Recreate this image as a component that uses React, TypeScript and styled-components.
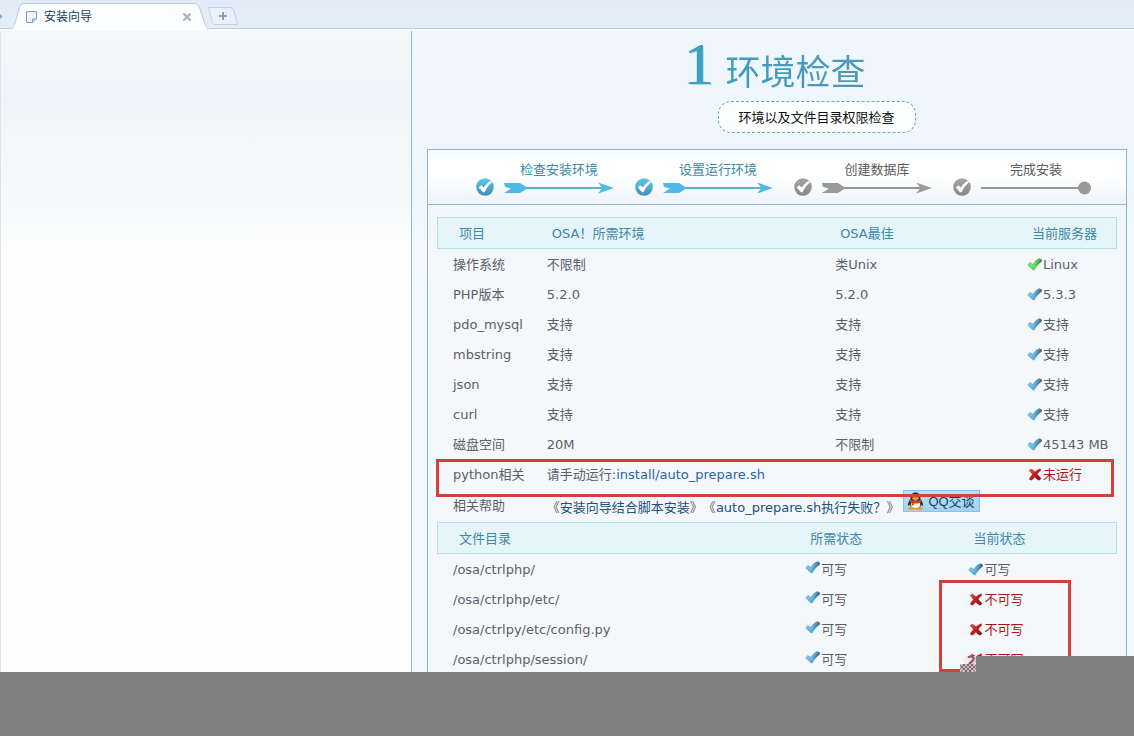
import React from 'react';
import styled, { createGlobalStyle, css } from 'styled-components';

const GlobalStyle = createGlobalStyle`
  * { box-sizing: border-box; }
  body {
    margin: 0;
    font-family: 'DejaVu Sans', 'Noto Sans CJK SC', sans-serif;
    font-size: 13px;
    color: #5b6067;
    text-spacing-trim: space-all;
  }
`;

const Screen = styled.div`
  display: flex;
  flex-direction: column;
  height: 100vh;
  overflow: hidden;
  background: #808080;
`;

/* ---------- browser tab strip ---------- */

const TabStrip = styled.header`
  display: flex;
  flex: none;
  align-items: flex-end;
  height: 31px;
  padding-bottom: 1px;
  background: linear-gradient(#e2ecf8, #e4eef8);
  box-shadow: inset 0 -2px #fbfdff, inset 0 -3px #bfcde0;
  overflow: hidden;
`;

const StripArrow = styled.span`
  align-self: center;
  width: 12px;
  height: 30px;
`;

const Tab = styled.div`
  position: relative;
  display: flex;
  align-items: center;
  gap: 6px;
  width: 196px;
  height: 28px;
  padding: 2px 15px 0 13px;
  font-size: 12px;
  color: #17405c;
`;

const TabShape = styled.svg`
  position: absolute;
  inset: 0;
`;

const TabIcon = styled.svg`
  position: relative;
  flex: none;
`;

const TabTitle = styled.span`
  position: relative;
  flex: 1;
  line-height: 16px;
`;

const IconButton = styled.button`
  position: relative;
  display: flex;
  padding: 0;
  border: 0;
  background: none;
`;

const NewTab = styled(IconButton)`
  align-self: flex-start;
  margin-top: 7px;
`;

/* ---------- page frame ---------- */

const Content = styled.div`
  position: relative;
  display: flex;
  flex: 1;
  min-height: 0;
  overflow: hidden;
`;

const SidePane = styled.aside`
  flex: none;
  width: 412px;
  border-left: 1px solid #dde2e8;
  border-right: 1px solid #8fb9d2;
  background: linear-gradient(#f4f7fa 0, #f0f4f8 72px, #f3f7fa 110px, #f6f9fb 170px, #fdfdfd 220px);
`;

const MainPane = styled.main`
  flex: 1;
  min-width: 0;
  padding: 0 7px 0 15px;
  background: linear-gradient(#eff7fc 0, #f0f7fc 180px, #f4f8fb 260px);
`;

const StatusBar = styled.footer`
  flex: none;
  height: 64px;
  background: #808080;
`;

const Notch = styled.div`
  position: absolute;
  right: 0;
  bottom: 0;
  display: flex;
  align-items: flex-end;
`;

const NotchFill = styled.div`
  width: 158px;
  height: 16px;
  background: #808080;
`;

/* ---------- heading ---------- */

const Heading = styled.div`
  display: flex;
  justify-content: center;
  gap: 6px;
  height: 118px;
  padding-left: 44px;
`;

const StepNumber = styled.span`
  width: 32px;
  padding-top: 1px;
  font: 60px/64px 'Liberation Serif', serif;
  color: #3ba1be;
  text-align: center;
  text-shadow: 1px 0 #3ba1be, 2px 1px #b5deeb;
`;

const HeadingText = styled.div`
  padding-top: 20px;
`;

const Title = styled.h1`
  margin: 0 0 6px 5px;
  font-size: 35px;
  font-weight: 400;
  line-height: 44px;
  background: linear-gradient(110deg, #3a9fc2, #5a92b2);
  background-clip: text;
  color: transparent;
`;

const Subtitle = styled.p`
  display: flex;
  align-items: center;
  justify-content: center;
  width: 198px;
  height: 32px;
  margin: 0 0 0 -3px;
  padding-bottom: 2px;
  border: 1px dashed #55b0bd;
  border-radius: 13px;
  background: #fcfefe;
  color: #111;
`;

/* ---------- wizard panel ---------- */

const Panel = styled.section`
  border: 1px solid #8db6cc;
  border-bottom: 0;
`;

const Steps = styled.ol`
  display: flex;
  height: 55px;
  margin: 0;
  padding: 10px 0 0 48px;
  list-style: none;
  border-bottom: 1px solid #8db6cc;
  background: linear-gradient(#f6fbfe, #ffffff 16px, #fdfefe 30px, #edf3f9);
`;

const Step = styled.li<{ $done?: boolean }>`
  display: flex;
  align-items: flex-end;
  flex: none;
  width: 159px;
  height: 36px;
  color: ${(p) => (p.$done ? '#3f8aa8' : '#5a5a5a')};
`;

const StepBody = styled.div`
  display: flex;
  flex-direction: column;
  align-items: center;
  width: 110px;
  margin-left: 10px;
  line-height: 20px;
`;

const Tables = styled.div`
  padding: 12px 9px 0;
`;

const TableWrap = styled.div`
  position: relative;
`;

const Table = styled.table`
  width: 100%;
  table-layout: fixed;
  border-collapse: separate;
  border-spacing: 0;
`;

const Col = styled.col<{ $w: number }>`
  width: ${(p) => p.$w}%;
`;

const Th = styled.th`
  height: 32px;
  padding: 0 0 2px 21px;
  border: solid #b7dcea;
  border-width: 1px 0;
  background: #e5f5f9;
  color: #3f87a8;
  font-weight: 400;
  text-align: left;
  &:first-child { border-left-width: 1px; }
  &:last-child { border-right-width: 1px; }
`;

const Td = styled.td`
  height: 30px;
  padding: 2px 0 0 16px;
  line-height: 18px;
  white-space: nowrap;
`;

const HelpTd = styled(Td)`
  height: 33px;
  padding-top: 0;
`;

const HelpLine = styled.div`
  display: flex;
  align-items: center;
  padding-top: 4px;
`;

const Link = styled.a`
  color: #1a5180;
  text-decoration: none;
`;

const PathLink = styled(Link)`
  color: #2a64a4;
`;

const Status = styled.span<{ $bad?: boolean; $raised?: boolean }>`
  display: flex;
  align-items: center;
  gap: 1px;
  ${(p) => p.$bad && css`color: #b01515;`}
  svg { margin-bottom: ${(p) => (p.$raised ? 5 : 2)}px; }
`;

const QQButton = styled.button`
  display: flex;
  align-items: center;
  gap: 4px;
  width: 77px;
  height: 22px;
  margin: -14px 0 0 4px;
  padding: 0 3px;
  border: 1px solid #8cc0e4;
  background: linear-gradient(#b8e0f6, #a3d3f0);
  font: 13px 'Liberation Sans', 'Noto Sans CJK SC', sans-serif;
  color: #1c3a55;
  white-space: nowrap;
`;

const RowMark = styled.div`
  position: absolute;
  top: 242px;
  left: -1px;
  right: 3px;
  height: 38px;
  border: 3px solid #d2403c;
  pointer-events: none;
`;

const CellMark = styled.div`
  position: absolute;
  top: 58px;
  right: 46px;
  width: 132px;
  height: 92px;
  border: 3px solid #d2403c;
  pointer-events: none;
`;

/* ---------- icons ---------- */

const GradientSheet = styled.svg`
  position: absolute;
`;

const Gradients = () => (
  <GradientSheet width="0" height="0" aria-hidden="true">
    <defs>
      <linearGradient id="blueTick" x1="0" y1="0" x2="1" y2="0">
        <stop offset="0" stopColor="#86c0e2" />
        <stop offset="0.5" stopColor="#55a9d6" />
        <stop offset="1" stopColor="#3c647f" />
      </linearGradient>
      <linearGradient id="greenTick" x1="0" y1="0" x2="1" y2="0">
        <stop offset="0" stopColor="#7fd676" />
        <stop offset="0.5" stopColor="#5fd455" />
        <stop offset="1" stopColor="#43784a" />
      </linearGradient>
      <linearGradient id="redCross" x1="0" y1="0" x2="1" y2="1">
        <stop offset="0" stopColor="#d8605a" />
        <stop offset="0.5" stopColor="#c01c1c" />
        <stop offset="1" stopColor="#821010" />
      </linearGradient>
      <linearGradient id="blueDisc" x1="0" y1="0" x2="0" y2="1">
        <stop offset="0" stopColor="#62c6ea" />
        <stop offset="1" stopColor="#3f8fb0" />
      </linearGradient>
      <linearGradient id="greyDisc" x1="0" y1="0" x2="0" y2="1">
        <stop offset="0" stopColor="#a6a6a6" />
        <stop offset="1" stopColor="#868686" />
      </linearGradient>
    </defs>
  </GradientSheet>
);

const Tick = ({ green }: { green?: boolean }) => (
  <svg width="15" height="13" viewBox="0 0 15 13" aria-hidden="true">
    <path
      d="M0.2 7 L2.8 4 L5.8 6 C7.6 3.4 9.8 1.4 12.4 0.2 L15 1.8 L14.8 3.6 C11.8 5.6 9.4 8.6 7.2 12.4 L5.6 12 Z"
      fill={green ? 'url(#greenTick)' : 'url(#blueTick)'}
    />
    <path
      d="M2.4 6 L6 8.4 C7.8 5.4 10.2 3 12.6 1.6"
      stroke="#fff"
      strokeOpacity="0.25"
      fill="none"
    />
  </svg>
);

const Cross = () => (
  <svg width="15" height="13" viewBox="0 0 15 13" aria-hidden="true">
    <path
      d="M1.6 2.4 L4.2 0.8 C5.6 1.4 7 2.6 8 3.8 C9.6 2.2 11.4 1 13.4 0.6 L14 2.4 C12.6 3.4 11.2 4.8 10.4 6.2 C11.8 7.8 13.2 9.4 14.4 10.6 L12.2 12.6 C10.6 11.8 9 10.6 7.8 9.2 C6.6 10.4 5.6 11.6 4.6 12.6 L1.8 11.2 C2.8 9.6 3.8 7.8 5.2 6.4 C4.2 4.8 2.8 3.6 1.6 2.4 Z"
      fill="url(#redCross)"
    />
  </svg>
);

const Disc = ({ done }: { done?: boolean }) => (
  <svg width="18" height="18" viewBox="0 0 18 18" aria-hidden="true">
    <circle cx="9" cy="9" r="8.8" fill={done ? 'url(#blueDisc)' : 'url(#greyDisc)'} />
    <path
      d="M2.8 9.6 L5.2 7.2 L7.8 9.4 C9.6 6.8 12 4.4 15.2 2.8 L15.8 4.6 C12.8 7 10.4 10.2 8.6 14.2 L7 14.2 Z"
      fill="#fff"
    />
  </svg>
);

const Arrow = ({ done }: { done?: boolean }) => (
  <svg width="110" height="16" viewBox="0 0 110 16" aria-hidden="true">
    <path d="M20 8 H100" stroke={done ? '#55b6c8' : '#969696'} strokeWidth="2" />
    <path
      d="M0 3 H16 L24 8 L16 13 H0 L7 8.6 L1 7 Z M94 2.4 L110 8 L94 13.6 L98.6 8 Z"
      fill={done ? '#4cb9e8' : '#9a9a9a'}
    />
  </svg>
);

const EndLine = () => (
  <svg width="110" height="16" viewBox="0 0 110 16" aria-hidden="true">
    <path d="M0 8 H100" stroke="#969696" strokeWidth="2" />
    <circle cx="103.5" cy="8" r="6.5" fill="#999" />
  </svg>
);

const Penguin = () => (
  <svg width="17" height="18" viewBox="0 0 17 18" aria-hidden="true">
    <path
      d="M3.6 7 C3.6 2.6 5.6 0.6 8.5 0.6 C11.4 0.6 13.4 2.6 13.4 7 C15 9 16.4 11.4 15.8 14 L14 13 C13.4 15.6 11.4 17 8.5 17 C5.6 17 3.6 15.6 3 13 L1.2 14 C0.6 11.4 2 9 3.6 7 Z"
      fill="#33262a"
    />
    <ellipse cx="8.5" cy="12.6" rx="4.8" ry="4" fill="#fff" />
    <ellipse cx="6.9" cy="4" rx="1.1" ry="1.6" fill="#fff" />
    <ellipse cx="10.1" cy="4" rx="1.1" ry="1.6" fill="#fff" />
    <ellipse cx="8.5" cy="6.6" rx="3.6" ry="1.3" fill="#f4a41c" />
    <path
      d="M3.2 7.6 C6.4 9.6 10.6 9.6 13.8 7.6 L14.2 10 C10.8 12 6.2 12 2.8 10 Z M4.6 10 H6.8 V13.4 H4.6 Z"
      fill="#e23a22"
    />
    <ellipse cx="4.8" cy="16.4" rx="3.4" ry="1.5" fill="#f0a020" />
    <ellipse cx="12.2" cy="16.4" rx="3.4" ry="1.5" fill="#f0a020" />
  </svg>
);

const ResizeGrip = () => (
  <svg width="16" height="16" viewBox="0 0 16 16" aria-hidden="true">
    <path d="M4 0 H16 V9 H4 Z" fill="#f3e6ea" fillOpacity="0.8" />
    <path d="M0 8 H16 V16 H0 Z" fill="#cdbcc2" />
    <path
      d="M0 9 L7 16 M3 8 L11 16 M7 8 L15 16 M11 8 L16 13 M5 8 L0 13 M9 8 L1 16 M13 8 L5 16 M16 9 L9 16"
      stroke="#7c6a70"
    />
    <path d="M8 1.5 C12 -1 15 2 13 4 L9 8" stroke="#7d5a60" strokeWidth="2" fill="none" />
  </svg>
);

/* ---------- data ---------- */

const steps = [
  { label: '检查安装环境', done: true },
  { label: '设置运行环境', done: true },
  { label: '创建数据库', done: false },
  { label: '完成安装', done: false },
];

const checks = [
  ['操作系统', '不限制', '类Unix', 'Linux'],
  ['PHP版本', '5.2.0', '5.2.0', '5.3.3'],
  ['pdo_mysql', '支持', '支持', '支持'],
  ['mbstring', '支持', '支持', '支持'],
  ['json', '支持', '支持', '支持'],
  ['curl', '支持', '支持', '支持'],
  ['磁盘空间', '20M', '不限制', '45143 MB'],
];

const folders = [
  { path: '/osa/ctrlphp/', ok: true },
  { path: '/osa/ctrlphp/etc/', ok: false },
  { path: '/osa/ctrlpy/etc/config.py', ok: false },
  { path: '/osa/ctrlphp/session/', ok: false },
];

export default function App() {
  return (
    <Screen>
      <GlobalStyle />
      <Gradients />
      <TabStrip>
        <StripArrow>
          <svg width="4" height="30" viewBox="0 0 4 30" aria-hidden="true">
            <path d="M0 14 L2.5 16.5 L0 19 Z" fill="#8fa0b8" />
          </svg>
        </StripArrow>
        <Tab>
          <TabShape width="196" height="28" viewBox="0 0 196 28" aria-hidden="true">
            <path
              d="M-2 26.5 C2 26 2.5 22 4 18 L7 7 C8 3 9 1.5 13 1.5 H181 C185 1.5 186.5 3 188 7 L192 19 C193.5 24 194 26.5 198 26.5 V28 H-2 Z"
              fill="#fcfdff"
              stroke="#b9c8dc"
            />
            <rect x="2" y="26" width="192" height="2" fill="#fcfdff" />
          </TabShape>
          <TabIcon width="13" height="14" viewBox="0 0 13 14" aria-hidden="true">
            <path d="M1.5 1.5 H11.5 V9 L7.5 12.5 H1.5 Z" fill="#eef5fd" stroke="#7f9cc8" />
            <path d="M11.5 9 H7.5 V12.5" fill="#c7d9f0" stroke="#7f9cc8" />
          </TabIcon>
          <TabTitle>安装向导</TabTitle>
          <IconButton aria-label="关闭标签">
            <svg width="12" height="12" viewBox="0 0 12 12">
              <path d="M2.5 2.5 L9.5 9.5 M9.5 2.5 L2.5 9.5" stroke="#a3adbd" strokeWidth="2" />
            </svg>
          </IconButton>
        </Tab>
        <NewTab aria-label="新标签">
          <svg width="30" height="19" viewBox="0 0 30 19">
            <path
              d="M0.5 0.5 H22 C24 0.5 25 1.5 26 4 L29.5 17.5 H8 C5 17.5 4.5 16.5 4 14.5 Z"
              fill="#e9f1fa"
              stroke="#c3d0e2"
            />
            <path d="M11 9 H19 M15 5 V13" stroke="#8e9cb2" strokeWidth="2" />
          </svg>
        </NewTab>
      </TabStrip>

      <Content>
        <SidePane />
        <MainPane>
          <Heading>
            <StepNumber>1</StepNumber>
            <HeadingText>
              <Title>环境检查</Title>
              <Subtitle>环境以及文件目录权限检查</Subtitle>
            </HeadingText>
          </Heading>

          <Panel>
            <Steps>
              {steps.map((s, i) => (
                <Step key={s.label} $done={s.done}>
                  <Disc done={s.done} />
                  <StepBody>
                    {s.label}
                    {i === steps.length - 1 ? <EndLine /> : <Arrow done={s.done} />}
                  </StepBody>
                </Step>
              ))}
            </Steps>

            <Tables>
              <TableWrap>
                <Table>
                  <colgroup>
                    <Col $w={13.8} />
                    <Col $w={42.4} />
                    <Col $w={28.2} />
                    <Col $w={15.6} />
                  </colgroup>
                  <thead>
                    <tr>
                      <Th>项目</Th>
                      <Th>OSA！所需环境</Th>
                      <Th>OSA最佳</Th>
                      <Th>当前服务器</Th>
                    </tr>
                  </thead>
                  <tbody>
                    {checks.map(([name, need, best, now], i) => (
                      <tr key={name}>
                        <Td>{name}</Td>
                        <Td>{need}</Td>
                        <Td>{best}</Td>
                        <Td>
                          <Status>
                            <Tick green={i === 0} />
                            {now}
                          </Status>
                        </Td>
                      </tr>
                    ))}
                    <tr>
                      <Td>python相关</Td>
                      <Td colSpan={2}>
                        请手动运行:<PathLink href="#prepare">install/auto_prepare.sh</PathLink>
                      </Td>
                      <Td>
                        <Status $bad>
                          <Cross />
                          未运行
                        </Status>
                      </Td>
                    </tr>
                    <tr>
                      <HelpTd>相关帮助</HelpTd>
                      <HelpTd colSpan={3}>
                        <HelpLine>
                          <span>
                            《<Link href="#guide">安装向导结合脚本安装</Link>》《
                            <Link href="#failed">auto_prepare.sh执行失败？</Link>》
                          </span>
                          <QQButton>
                            <Penguin />
                            QQ交谈
                          </QQButton>
                        </HelpLine>
                      </HelpTd>
                    </tr>
                  </tbody>
                </Table>
                <RowMark />
              </TableWrap>

              <TableWrap>
                <Table>
                  <colgroup>
                    <Col $w={51.8} />
                    <Col $w={24} />
                    <Col $w={24.2} />
                  </colgroup>
                  <thead>
                    <tr>
                      <Th>文件目录</Th>
                      <Th>所需状态</Th>
                      <Th>当前状态</Th>
                    </tr>
                  </thead>
                  <tbody>
                    {folders.map((f) => (
                      <tr key={f.path}>
                        <Td>{f.path}</Td>
                        <Td>
                          <Status $raised>
                            <Tick />
                            可写
                          </Status>
                        </Td>
                        <Td>
                          <Status $bad={!f.ok}>
                            {f.ok ? <Tick /> : <Cross />}
                            {f.ok ? '可写' : '不可写'}
                          </Status>
                        </Td>
                      </tr>
                    ))}
                  </tbody>
                </Table>
                <CellMark />
              </TableWrap>
            </Tables>
          </Panel>
        </MainPane>
        <Notch>
          <ResizeGrip />
          <NotchFill />
        </Notch>
      </Content>
      <StatusBar />
    </Screen>
  );
}
